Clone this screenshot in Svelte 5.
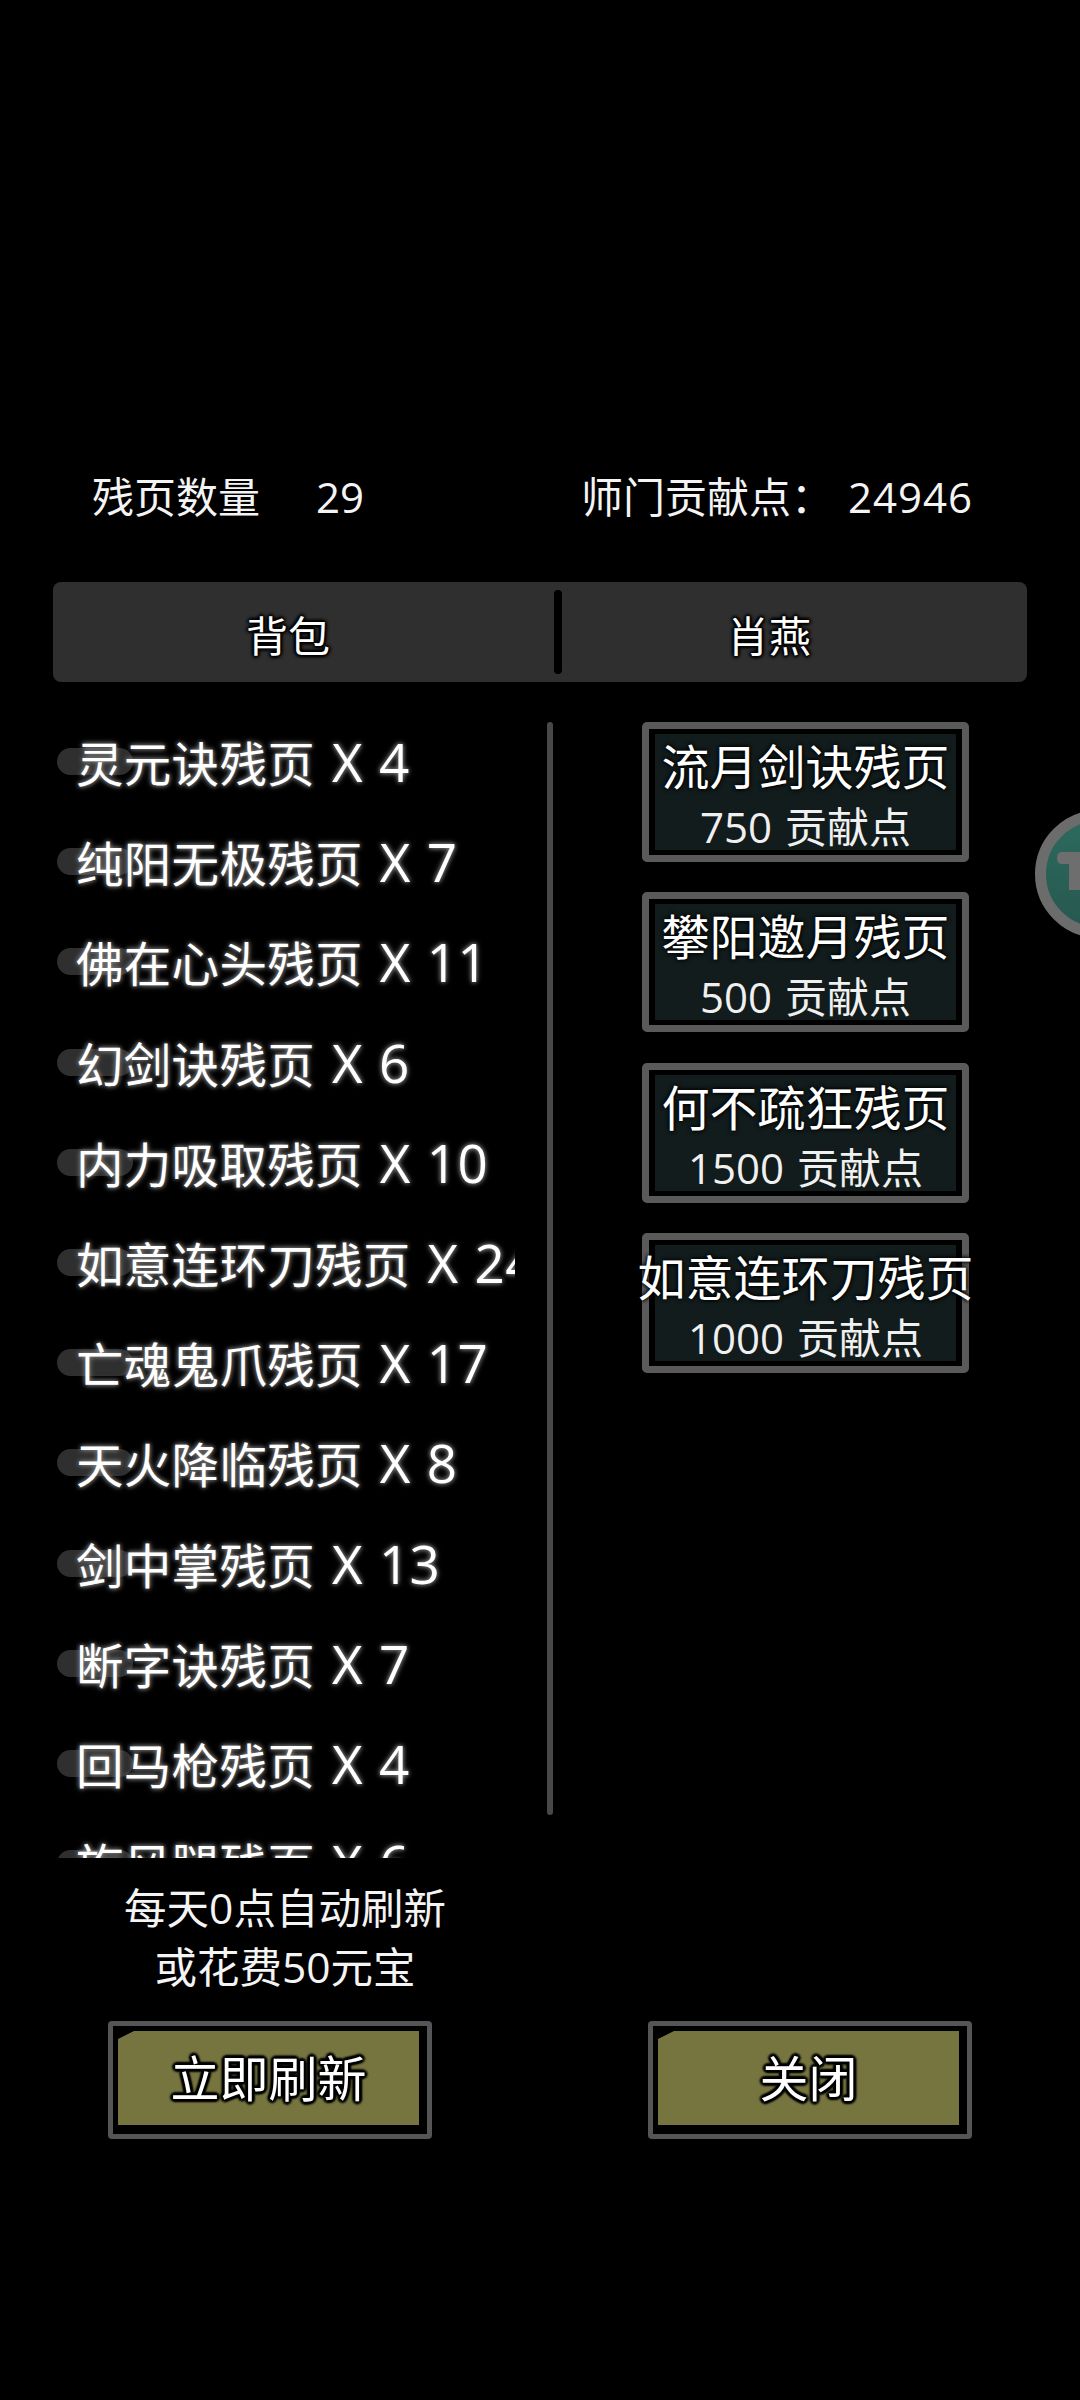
<script lang="ts">
	const fragments = [
		{ name: '灵元诀残页', count: 4 },
		{ name: '纯阳无极残页', count: 7 },
		{ name: '佛在心头残页', count: 11 },
		{ name: '幻剑诀残页', count: 6 },
		{ name: '内力吸取残页', count: 10 },
		{ name: '如意连环刀残页', count: 24 },
		{ name: '亡魂鬼爪残页', count: 17 },
		{ name: '天火降临残页', count: 8 },
		{ name: '剑中掌残页', count: 13 },
		{ name: '断字诀残页', count: 7 },
		{ name: '回马枪残页', count: 4 },
		{ name: '旋风腿残页', count: 6 }
	];

	const shopItems = [
		{ name: '流月剑诀残页', cost: 750 },
		{ name: '攀阳邀月残页', cost: 500 },
		{ name: '何不疏狂残页', cost: 1500 },
		{ name: '如意连环刀残页', cost: 1000 }
	];
</script>

<div class="page">
	<div class="stats">
		<div class="stat-left"><span>残页数量</span><span class="stat-num">29</span></div>
		<div class="stat-right"><span>师门贡献点：</span><span class="stat-points">24946</span></div>
	</div>

	<div class="tabs">
		<div class="tab tab-bag">背包</div>
		<div class="tab-divider"></div>
		<div class="tab tab-npc">肖燕</div>
	</div>

	<div class="main">
		<div class="list">
			{#each fragments as item}
				<div class="row">
					<span class="bubble"></span>
					<span class="row-text">{item.name}<span class="row-count">X {item.count}</span></span>
				</div>
			{/each}
		</div>
		<div class="scrollbar"></div>

		<div class="shop">
			{#each shopItems as item}
				<div class="shop-item">
					<div class="shop-inner">
						<div class="shop-name">{item.name}</div>
						<div class="shop-cost">{item.cost} 贡献点</div>
					</div>
				</div>
			{/each}
		</div>
	</div>

	<div class="note">
		<div>每天0点自动刷新</div>
		<div>或花费50元宝</div>
	</div>

	<div class="actions">
		<div class="action"><div class="action-inner">立即刷新</div></div>
		<div class="action"><div class="action-inner">关闭</div></div>
	</div>

	<div class="float-btn">
		<svg width="40" height="40" viewBox="0 0 40 40">
			<path d="M5 0H40V12H30V38H12V12H5Q0 12 0 6Q0 0 5 0Z" fill="#6e6e6e" />
		</svg>
	</div>
</div>

<style>
	:global(body) {
		background: #000;
	}

	.page {
		position: relative;
		width: 1080px;
		height: 2400px;
		overflow: hidden;
		background: #000;
		color: #fff;
		font-family: 'Open Sans', 'Noto Sans CJK SC', sans-serif;
		font-weight: 400;
	}

	.stats {
		display: flex;
		padding: 467px 0 0 92px;
		height: 582px;
		box-sizing: border-box;
		font-size: 42px;
		line-height: 60px;
		color: #f4f4f4;
		white-space: nowrap;
	}

	.stat-left {
		width: 489px;
		display: flex;
	}

	.stat-num {
		margin-left: 56px;
	}

	.stat-right {
		display: flex;
	}

	.stat-points {
		margin-left: 15px;
		letter-spacing: 1px;
	}

	.tabs {
		display: flex;
		align-items: center;
		width: 974px;
		height: 100px;
		margin-left: 53px;
		background: #2f2f2f;
		border-radius: 8px;
	}

	.tab {
		font-size: 42px;
		line-height: 100px;
		text-align: center;
		box-sizing: border-box;
		padding-top: 7px;
		text-shadow:
			2px 0 3px #000,
			-2px 0 3px #000,
			0 2px 3px #000,
			0 -2px 3px #000,
			0 0 4px #000;
	}

	.tab-bag {
		width: 504px;
		padding-right: 34px;
	}

	.tab-npc {
		width: 462px;
		padding-right: 54px;
	}

	.tab-divider {
		width: 8px;
		height: 84px;
		background: #000;
		border-radius: 4px;
		margin-left: -3px;
		margin-right: 3px;
	}

	.main {
		display: flex;
		align-items: flex-start;
		height: 1176px;
		padding: 31px 0 0 57px;
		box-sizing: border-box;
	}

	.list {
		width: 458px;
		height: 1145px;
		overflow: hidden;
		flex-shrink: 0;
	}

	.row {
		position: relative;
		height: 100.2px;
		display: flex;
		align-items: center;
		overflow: hidden;
	}

	.bubble {
		position: absolute;
		left: 0;
		top: 35px;
		width: 76px;
		height: 27px;
		border-radius: 14px;
		background: #2f2f2f;
	}

	.row-text {
		position: relative;
		margin-left: 19px;
		font-size: 47.5px;
		line-height: 60px;
		white-space: nowrap;
		letter-spacing: 0.3px;
		text-shadow:
			0 0 4px #8a8a8a,
			0 0 6px #666;
	}

	.row-count {
		margin-left: 17px;
		font-size: 53px;
		word-spacing: 2px;
	}

	.scrollbar {
		width: 6px;
		height: 1093px;
		margin: 9px 0 0 32px;
		flex-shrink: 0;
		background: #484848;
		border-radius: 3px;
	}

	.shop {
		display: flex;
		flex-direction: column;
		gap: 30.3px;
		margin: 9px 0 0 89px;
	}

	.shop-item {
		width: 327px;
		height: 140px;
		box-sizing: border-box;
		padding: 5px 6px;
		border: 7px solid #5a5a5a;
		border-radius: 5px;
		background: #000;
	}

	.shop-inner {
		display: flex;
		flex-direction: column;
		align-items: center;
		height: 100%;
		background: #121c1c;
		white-space: nowrap;
	}

	.shop-name {
		font-size: 48px;
		line-height: 60px;
		margin-top: 3px;
		text-shadow: 0 0 4px #000, 0 0 4px #000;
	}

	.shop-cost {
		font-size: 42px;
		line-height: 60px;
		word-spacing: 2px;
		color: #f0f0f0;
	}

	.note {
		width: 570px;
		margin-top: 20px;
		font-size: 42.5px;
		line-height: 59px;
		text-align: center;
		color: #f4f4f4;
	}

	.actions {
		display: flex;
		gap: 216px;
		margin: 25px 0 0 108px;
	}

	.action {
		width: 324px;
		height: 118px;
		box-sizing: border-box;
		padding: 5px 8px 9px 5px;
		border: 5px solid #555;
		border-radius: 4px;
		background: #000;
	}

	.action-inner {
		height: 100%;
		background: #767540;
		clip-path: polygon(16px 0, 100% 0, 100% 100%, 0 100%, 0 8px);
		font-size: 49px;
		line-height: 94px;
		text-align: center;
		text-shadow:
			3px 0 2px #000,
			-3px 0 2px #000,
			0 3px 2px #000,
			0 -3px 2px #000,
			2px 2px 2px #000,
			-2px 2px 2px #000,
			2px -2px 2px #000,
			-2px -2px 2px #000;
	}

	.float-btn {
		position: absolute;
		left: 1035px;
		top: 810px;
		width: 128px;
		height: 128px;
		box-sizing: border-box;
		border: 11px solid #6c6c6c;
		border-radius: 50%;
		background: linear-gradient(#2c6a5e, #27584f);
	}

	.float-btn svg {
		position: absolute;
		left: 11px;
		top: 31px;
	}
</style>
